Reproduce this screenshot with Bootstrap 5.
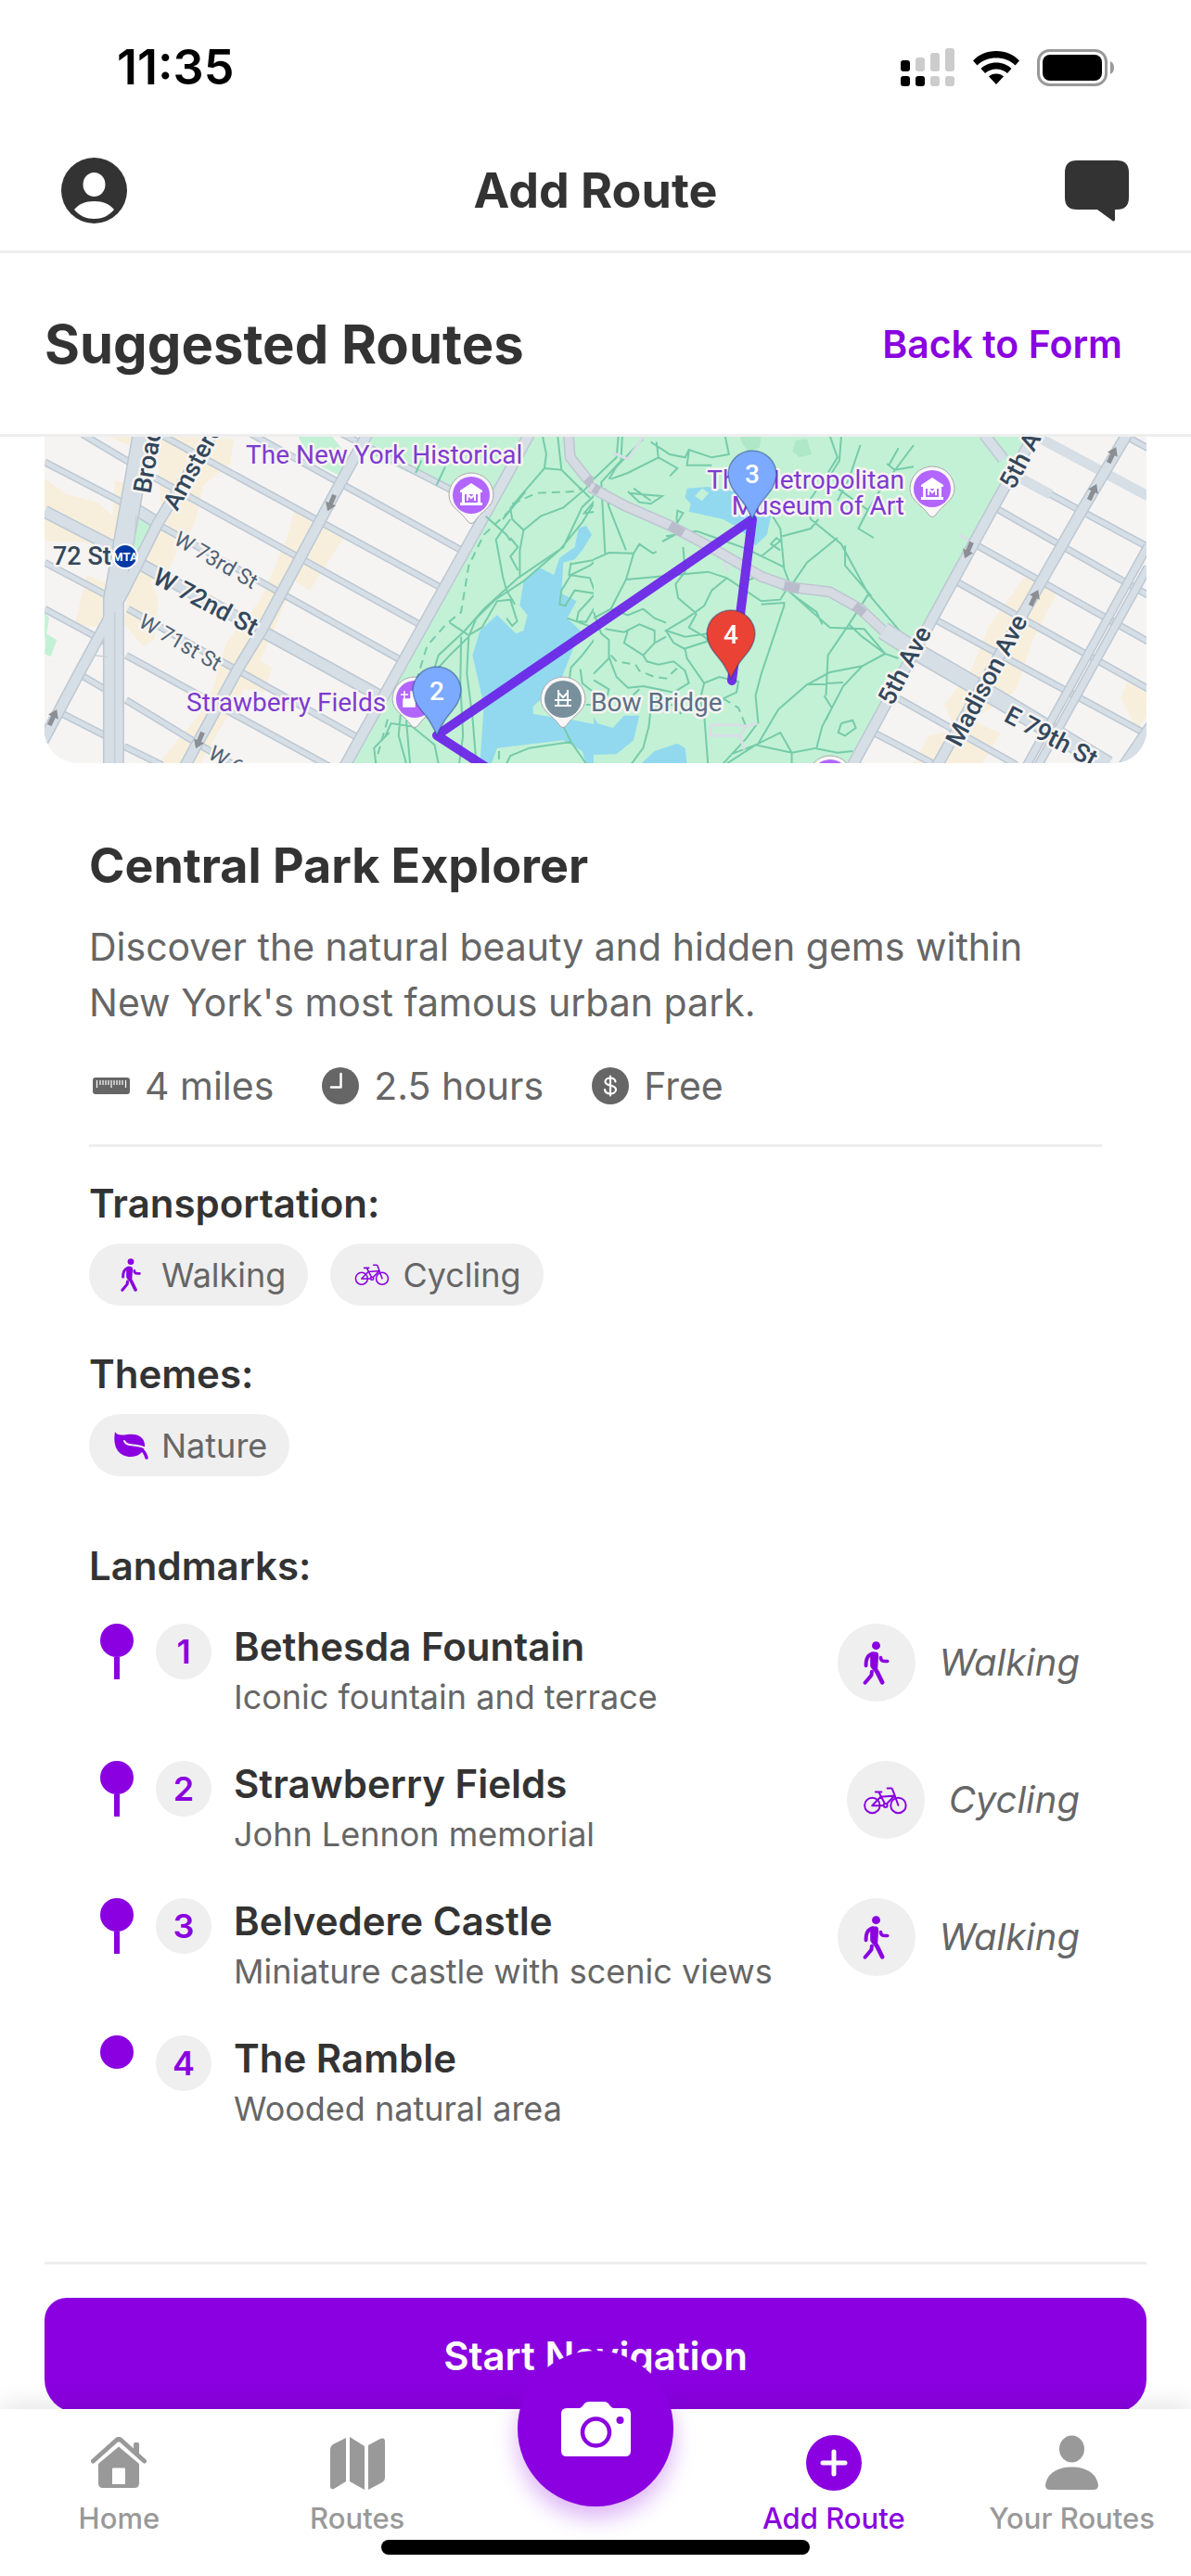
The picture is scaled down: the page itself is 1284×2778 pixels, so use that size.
<!DOCTYPE html>
<html lang="en">
<head>
<meta charset="utf-8">
<meta name="viewport" content="width=device-width, initial-scale=1">
<title>Add Route</title>
<link href="https://cdn.jsdelivr.net/npm/bootstrap@5.3.0/dist/css/bootstrap.min.css" rel="stylesheet">
<style>
  :root { --brand: #8a00e0; --ink: #333; --soft: #666; --line: #eee; --chip: #efefef; }
  body { font-family: Inter, "Liberation Sans", sans-serif; color: var(--ink); background: #fff; }
  svg { display: block; flex: none; }
  .statusbar { height: 141px; padding: 4px 82px 0 126px; color: #000; }
  .clock { font-size: 52px; line-height: 60px; font-weight: 600; }
  .status-icons { gap: 18px; }
  .appbar { height: 132px; padding: 0 66px; border-bottom: 3px solid var(--line); }
  .appbar h1 { font-size: 52px; line-height: 66px; font-weight: 700; }
  .subbar { height: 198px; padding: 0 74px 0 48px; border-bottom: 3px solid var(--line); }
  .subbar h2 { font-size: 58px; line-height: 72px; font-weight: 700; }
  .subbar a { font-size: 41px; line-height: 54px; font-weight: 600; color: var(--brand); }
  .feed { min-height: 0; padding: 0 48px; }
  .mapview { height: 352px; border-radius: 0 0 36px 36px; background: #f6f4f2; }
  .mapview text { font-family: Roboto, "Liberation Sans", sans-serif; font-size: 28px; paint-order: stroke; stroke: #f6f4f2; stroke-width: 5px; stroke-linejoin: round; }
  .mapview .minor text { font-size: 23px; }
  .mapview .avenue text { font-size: 27px; }
  .mapview .bare text { stroke: none; }
  .mapview .metro text { font-size: 13px; stroke: none; }
  .thin path { vector-effect: non-scaling-stroke; }
  .route-body { padding: 78px 48px 0; }
  .route-body h3 { font-size: 52px; line-height: 66px; font-weight: 700; margin-bottom: 24px; }
  .t-body { font-size: 41px; line-height: 60px; color: var(--soft); }
  .stats { gap: 48px; margin-top: 30px; padding-bottom: 33px; border-bottom: 3px solid var(--line); }
  .stat { gap: 12px; }
  .t-head { font-size: 42px; line-height: 54px; font-weight: 600; }
  .first-head { margin-top: 34px; }
  .list-head { margin: 70px 0 35px; }
  .chips { gap: 24px; margin: 16px 0 47px; }
  .chip { height: 67px; padding: 0 24px; gap: 12px; background: var(--chip); color: var(--soft); font-size: 36px; border-radius: 34px; }
  .stop { height: 148px; padding-right: 24px; }
  .rail { width: 60px; }
  .dot { width: 36px; height: 36px; background: var(--brand); }
  .stem { width: 6px; height: 24px; background: var(--brand); }
  .num { width: 60px; height: 60px; margin: 0 24px 0 12px; background: var(--chip); color: var(--brand); font-size: 36px; font-weight: 600; }
  .stop-name { font-size: 42px; line-height: 50px; font-weight: 600; }
  .stop-note { font-size: 36px; line-height: 44px; margin-top: 7px; color: var(--soft); }
  .mode { height: 84px; gap: 26px; font-size: 40px; font-style: italic; color: var(--soft); }
  .mode-disc { width: 84px; height: 84px; background: var(--chip); }
  .route-end { margin-top: 96px; padding-top: 36px; border-top: 3px solid var(--line); }
  .btn-start { height: 124px; border: 0; border-radius: 24px 24px 36px 36px; font-size: 42px; font-weight: 600; background: var(--brand); color: #fff; }
  .tabbar { height: 180px; padding-top: 28px; background: #fff; box-shadow: 0 -6px 24px rgba(0,0,0,.1); }
  .tab { gap: 12px; flex: 1 1 0; color: #999; font-size: 31px; line-height: 36px; font-weight: 500; text-decoration: none; white-space: nowrap; }
  .tab.current { color: var(--brand); }
  .tab-icon { height: 60px; }
  .shoot { width: 168px; height: 168px; top: -63px; left: 50%; margin-left: -84px; padding: 0; border: 0; background: var(--brand); box-shadow: 0 12px 24px rgba(138,0,224,.3); }
  .homebar { width: 36%; height: 16px; bottom: 23px; left: 32%; background: #000; }
  .purple { color: var(--brand); }
</style>
<script src="https://cdn.jsdelivr.net/npm/bootstrap@5.3.0/dist/js/bootstrap.bundle.min.js"></script>
</head>
<body class="d-flex flex-column vh-100 overflow-hidden">

<svg width="0" height="0" class="position-absolute" aria-hidden="true">
  <symbol id="walk" viewBox="186 116 142 142">
    <circle cx="257" cy="130" r="13.5" fill="currentColor"/>
    <g fill="none" stroke="currentColor" stroke-linecap="round" stroke-linejoin="round">
      <path d="M246 156C229 162 224 172 224 195" stroke-width="12"/>
      <path d="M272 169L273 175Q276 181 285 181H294" stroke-width="11"/>
      <path d="M243 215L242 226L221 251" stroke-width="12"/>
      <path d="M248 200Q257 209 262 219L277 250" stroke-width="14"/>
    </g>
    <path d="M238 156Q246 149 256 151Q265 152 265 162L262 206L252 210L238 198Z" fill="currentColor"/>
  </symbol>
  <symbol id="bike" viewBox="209 562 143 143">
    <g fill="none" stroke="currentColor" stroke-width="6" stroke-linecap="round" stroke-linejoin="round">
      <circle cx="237.500" cy="650" r="25"/><circle cx="323" cy="650" r="25"/><circle cx="281" cy="650" r="6"/>
      <path d="M237 651L265 622L312 618M248 606H268M259 607L279 645M237 651H274M285 645L310 619M287 594H300Q303 594 304 598L323 650"/>
    </g>
  </symbol>
  <symbol id="poi" viewBox="-26 -26 52 60">
    <path d="M-24 0A24 24 0 1 1 24 0C24 13 10 18 4 28Q0 33-4 28C-10 18-24 13-24 0Z" fill="#f8f6f6" stroke="#a9a9ad" stroke-width="1"/>
    <circle r="20" fill="currentColor"/>
  </symbol>
  <symbol id="museum" viewBox="-14 -14 28 28">
    <path d="M-12-4L0-12L12-4V-2H-12ZM-10-2H-7V9H-10ZM7-2H10V9H7ZM-12 9H12V12H-12ZM-10-4H10V0H-10Z" fill="#fff"/>
    <path d="M-4 7V0L0 4L4 0V7" fill="none" stroke="#fff" stroke-width="2"/>
  </symbol>
  <symbol id="pin" viewBox="-27 -27 54 76">
    <path d="M-26 0A26 26 0 1 1 26 0C25 14 17 20 9 31C4 39 2 43 0 48C-2 43-4 39-9 31C-17 20-25 14-26 0Z" fill="currentColor" stroke="#1d3a78" stroke-opacity=".45" stroke-width="1.500"/>
  </symbol>
  <symbol id="way" viewBox="-8 -10 16 20"><path d="M0-10L6-1H2.500V9H-2.500V-1H-6Z" fill="#8b8f94"/></symbol>
</svg>

<div class="statusbar d-flex align-items-center justify-content-between flex-shrink-0">
  <span class="clock">11:35</span>
  <div class="status-icons d-flex align-items-center">
    <svg width="60" height="42" viewBox="0 0 60 42" aria-label="Signal">
      <g fill="#ccc"><rect x="17" y="10" width="10" height="15" rx="3"/><rect x="33" y="5" width="10" height="20" rx="3"/><rect x="49" y="0" width="10" height="25" rx="3"/><rect x="33" y="30" width="10" height="11" rx="3"/><rect x="49" y="30" width="10" height="11" rx="3"/></g>
      <rect x="1" y="13" width="10" height="12" rx="3"/><rect x="1" y="30" width="10" height="11" rx="3"/><rect x="17" y="30" width="10" height="11" rx="3"/>
    </svg>
    <svg width="52" height="38" viewBox="0 0 52 38" aria-label="Wi-Fi">
      <path d="M26 1C16 1 7 5 1 11.500L5.500 16.500C11 11 18 8.500 26 8.500S41 11 46.500 16.500L51 11.500C45 5 36 1 26 1ZM26 13.500C19.500 13.500 13.500 16 9.500 20L14 25C17.500 22 21.500 20.500 26 20.500S34.500 22 38 25L42.500 20C38.500 16 32.500 13.500 26 13.500ZM26 25.500C22.500 25.500 20 26.500 18 28.500L26 37L34 28.500C32 26.500 29.500 25.500 26 25.500Z"/>
    </svg>
    <svg width="84" height="40" viewBox="0 0 84 40" aria-label="Battery">
      <rect x="1.500" y="1.500" width="73" height="37" rx="12" fill="none" stroke="#999" stroke-width="3"/>
      <rect x="6" y="6" width="64" height="28" rx="8"/><path d="M79 13Q83 15 83 20T79 27Z" fill="#999"/>
    </svg>
  </div>
</div>

<header class="appbar d-flex align-items-center justify-content-between flex-shrink-0">
  <svg width="71" height="71" viewBox="0 0 71 71" aria-label="Profile">
    <circle cx="35.500" cy="35.500" r="35.500" fill="#333"/>
    <ellipse cx="35.500" cy="29" rx="12" ry="13" fill="#fff"/>
    <path d="M14 56C19 50 26 47 35.500 47S52 50 57 56C51 63 44 66 35.500 66S20 63 14 56Z" fill="#fff"/>
  </svg>
  <h1 class="m-0">Add Route</h1>
  <svg width="71" height="68" viewBox="0 0 71 68" aria-label="Messages">
    <path d="M14 1H57Q70 1 70 14V41Q70 54 57 54H55V65Q54 68 51 65L36 54H14Q1 54 1 41V14Q1 1 14 1Z" fill="#333"/>
  </svg>
</header>

<div class="subbar d-flex align-items-center justify-content-between flex-shrink-0">
  <h2 class="m-0">Suggested Routes</h2>
  <a href="#form" class="text-decoration-none">Back to Form</a>
</div>

<main class="feed flex-fill overflow-hidden">
  <article>
    <div class="mapview overflow-hidden">
      <svg width="100%" height="352" viewBox="0 0 1188 352" preserveAspectRatio="xMidYMid slice" role="img" aria-label="Route map">
        <rect width="1188" height="352" fill="#f6f4f2"/>
        <!-- west side -->
        <g class="thin" transform="matrix(.40816 0 0 .33333 -8 -11)" fill="none">
          <g fill="#f7efdc">
            <path d="M20 170L80 220L160 245L200 290L205 175L255 190L235 385L195 390L120 375L20 370ZM315 30L520 40L510 120L440 190L415 320L370 400L350 460L300 500L320 560L310 690L280 710L230 640L245 480L280 400L330 300ZM130 480L190 510L170 650L100 640Z"/>
            <path d="M680 270L815 350L720 530L680 500L590 755L620 780L600 860L545 850L430 1090L320 1090L450 900L500 700L590 560L660 360Z"/>
            <path d="M190 33L260 33L240 60Z"/>
          </g>
          <path d="M690 33H780L830 110L800 160L720 110ZM880 33H1300L1200 230L1100 215L860 80ZM250 290L310 320L262 410L240 400ZM20 600L32 620L20 700ZM24 670L52 690L36 745L20 735ZM180 640L184 690L165 685Z" fill="#c3f1d5"/>
          <path d="M1240 160L1300 33H1568V1090H815Z" fill="#c3f1d5"/>
          <path d="M1450 320L1465 350L1440 400L1420 430L1390 440L1385 540L1425 565L1400 620L1435 660L1380 830L1310 905L1310 930L1420 950L1520 975L1545 960L1568 940V1060H1540V1090H1450L1440 1050L1390 1015L1215 1040L1200 1090H1170L1180 900L1150 740L1170 660L1215 610L1265 670L1285 660L1295 610L1275 580L1285 500L1325 455L1365 480L1380 425L1420 390L1430 330Z" fill="#92d9f0"/>
          <g stroke="#bcc8d3" stroke-width="8">
            <path d="M560 20L1120 400M320 22L1065 520M310 165L1010 640M280 290L960 755M240 590L845 1005M235 740L780 1105M235 885L430 1030L520 1095M800 20L1110 215M120 25L250 120M20 115L240 255M20 440L190 550M20 590L185 700M110 800L180 850M60 925L180 1000M230 1035L330 1095M20 1050L60 1095"/>
            <path d="M280 450L925 885M20 275L210 395M250 260L330 320" stroke-width="14"/>
          </g>
          <g stroke="#d6dee6" stroke-width="5">
            <path d="M560 20L1120 400M320 22L1065 520M310 165L1010 640M280 290L960 755M240 590L845 1005M235 740L780 1105M235 885L430 1030L520 1095M800 20L1110 215M120 25L250 120M20 115L240 255M20 440L190 550M20 590L185 700M110 800L180 850M60 925L180 1000M230 1035L330 1095M20 1050L60 1095"/>
            <path d="M280 450L925 885M20 275L210 395M250 260L330 320" stroke-width="11"/>
          </g>
          <g stroke="#bcc8d3" stroke-width="13">
            <path d="M1302 20L1240 160L812 1100M872 25L800 185L590 665L530 785L390 1100M465 20L320 310L230 530L110 800L10 1030"/>
            <path d="M280 20L202 560V1100" stroke-width="23"/>
          </g>
          <g stroke="#d6dee6" stroke-width="10">
            <path d="M1302 20L1240 160L812 1100M872 25L800 185L590 665L530 785L390 1100M465 20L320 310L230 530L110 800L10 1030"/>
            <path d="M280 20L202 560V1100" stroke-width="20"/>
          </g>
          <path d="M262 290L256 380M205 600V1090M150 740L185 745" stroke="#c7d0d9" stroke-width="1.500"/>
          <g stroke="#75cbaa" stroke-width="2">
            <path d="M1335 30L1345 90L1340 135L1280 220L1250 265L1255 300L1285 335L1275 400L1275 490M1375 30L1385 140L1340 135M1385 140L1410 170L1460 230M1250 300L1212 365L1230 485L1240 530L1262 575M1250 360L1270 390L1250 420L1270 465M1285 335L1330 290L1390 262L1450 200L1480 150L1530 60M1568 60L1500 190L1440 260L1390 390L1270 490L1180 590L1130 660L1060 740L1050 780M1480 230L1440 310L1380 400L1285 500L1210 560L1160 620L1140 680L1090 740L1060 780M1500 200L1445 280L1478 275L1482 235L1520 290L1568 320M1498 290V410L1558 408M1090 635L1140 675L1175 650L1215 565L1250 560L1268 630L1255 645L1240 620M1120 680L1118 830L1125 1000L1115 1090M1140 680L1135 800L1150 940L1160 1090M1185 290L1240 350L1250 370M1290 210L1230 300M1055 190L1078 130M1000 150L1015 110"/>
            <path d="M1410 440L1405 480L1460 490L1475 540L1420 530L1395 580L1380 575L1385 530L1410 480L1460 450L1480 430L1410 445M1475 540L1430 600L1425 630L1450 632L1475 580L1530 540L1550 490L1568 520M1490 660L1520 690L1515 740L1490 790L1500 840L1470 900L1450 900M1490 660L1440 740L1410 780L1405 830M1400 620L1480 655L1568 640M1500 650L1540 670M1435 785L1440 830L1470 860L1540 800L1568 820M1390 970L1410 1020L1300 1040L1250 1065L1240 1090M1410 1020L1450 1090M960 930L955 1000L975 1090M975 950L985 1090M920 1000L935 960L990 970L1050 1030L1060 1090M895 1090L890 1040L930 990"/>
            <path d="M1255 250L1320 215L1420 210L1440 200M1250 270L1180 350L1140 450L1120 600L1080 640L1030 710L1000 830M900 1060L930 930M1220 1050V1090M1515 750L1568 770" stroke-dasharray="9 6"/>
          </g>
          <path d="M1403 20L1408 100L1450 165L1500 225L1568 265" stroke="#bfc6d2" stroke-width="12"/>
          <path d="M1403 20L1408 100L1450 165L1500 225L1568 265" stroke="#d5dae3" stroke-width="9"/>
          <path d="M1452 168L1487 212" stroke="#b9bdcb" stroke-width="10"/>
          <path d="M1520 90L1550 105L1568 80" stroke="#d5dae3" stroke-width="3"/>
        </g>
        <!-- park interior and east side -->
        <g class="thin" transform="matrix(.41071 0 0 .33333 592 -11)" fill="none">
          <path d="M0 33H1145L1050 260L890 620L680 1090H0V960L50 975L80 935V900H0Z" fill="#c3f1d5"/>
          <path d="M385 33H440L435 70L405 80L388 50ZM530 45L560 40L572 90L540 100L522 80Z" fill="#aee8c6"/>
          <path d="M245 200L300 195L370 210L465 290L455 350L425 385L400 350L370 320L340 300L250 275L255 250L240 230ZM0 940L10 960L50 975L80 935L120 935L105 1015L60 1060L0 1062ZM125 1090L160 1050L220 1025L240 1040L245 1090Z" fill="#92d9f0"/>
          <path d="M285 200L302 215L285 240L265 225Z" fill="#c3f1d5"/>
          <path d="M1130 485L1215 540L1150 700L1110 850L1060 900L990 950L1068 992L1020 1090H840L880 1000L950 980L920 900L990 790L1040 640L1100 540ZM1400 825L1451 860V940L1425 980L1385 880Z" fill="#f7efdc"/>
          <g stroke="#75cbaa" stroke-width="2">
            <path d="M65 30L60 100L0 170M75 30L72 110L20 180L30 410M130 40L60 130L40 170M165 50L170 100L90 150L45 170M345 30L355 90L310 100L250 75L240 100L200 90L150 50M250 80L245 125L310 125M170 100L220 135L200 160M90 210L120 245L150 250L180 225L130 220L95 215M105 200L150 240M30 200L40 260L85 400M215 320L235 280L220 272L218 295L222 345L180 372M190 355L270 338L400 395L500 455M235 390L240 470L215 510L222 555L270 605M0 430L40 408L105 410L85 495L45 590L0 620M105 410L120 380L155 410L165 405M85 495L170 485L300 470L350 490L440 565L490 560L515 510L500 460L490 330L460 270L430 210M350 490L310 530L290 580L245 620L190 660L240 680L300 670M500 530L440 480L400 500M440 575L500 570L500 580L440 800L425 870L432 960M620 30L640 100L600 180L560 250L570 300L650 380L720 540L830 700M650 30L645 110L625 150L640 200L720 270L695 330L735 360M720 270L755 200L840 60M700 60L670 170L640 240M770 120L790 140L840 130M775 125L800 70M495 355L570 330L590 300M640 360L560 440L510 530L620 650L710 655L765 735L800 750M720 545L670 640L615 740L610 870M660 385V450L730 550M670 640L705 680L765 735L705 775L655 840L600 970L585 1040L520 1055L425 1030L350 1090M520 1055L490 990L425 1030L360 1060M520 1055V1090M560 835L620 795L705 775M560 835L485 915L430 1030M560 835L655 828M605 870L625 910L610 950M585 1042L640 1055L680 1050M650 960L680 950L688 975L660 1000L642 990L650 960M290 930L300 1090M340 1090L400 1010L430 960M440 420L490 370L480 360L465 380L490 400M510 530L540 560L585 600L600 640"/>
            <path d="M0 600L20 670L40 690L40 750L0 800M30 655L80 665L120 640L160 660L160 700L130 740L80 700L90 660M40 745L60 810L90 845L130 840L170 850L210 860L250 830L240 790L210 760L170 770L140 760L130 740M190 660L210 700L240 720L245 750L290 830L280 880L290 940M235 720L310 690M290 830L330 810L380 825L375 860L340 880M160 700L190 680M0 820L40 850L30 900L60 920L120 850M150 910L145 970L130 1040L100 1090M180 850L150 910L210 900L230 930M270 605L250 650L290 680L310 700M45 590L90 610L130 590L160 620L190 635"/>
            <path d="M45 740L60 760L110 770L120 790L160 810L190 815L230 770M340 880L380 910L400 970" stroke-dasharray="9 6"/>
          </g>
          <path d="M308 965H380L400 970L430 960M308 965L305 1000H385L395 1045M400 970L385 1000M340 440L355 468M130 33L90 105L50 85M960 350L1000 380" stroke="#d9dde6" stroke-width="3"/>
          <path d="M-10 195L80 255L200 320L300 385L440 485L520 520L620 535L700 590L760 660L850 730" stroke="#bfc6d2" stroke-width="12"/>
          <path d="M-10 195L80 255L200 320L300 385L440 485L520 520L620 535L700 590L760 660L850 730" stroke="#d5dae3" stroke-width="9"/>
          <path d="M200 320L235 345M500 515L540 525M685 580L710 605M0 198L14 208" stroke="#b9bdcb" stroke-width="10"/>
          <path d="M1110 160L1455 390M1050 260L1455 545M1000 380L1455 695M950 500L1455 848M890 620L1440 988M800 880L1110 1095M735 990L890 1090M1395 30L1455 70" stroke="#bcc8d3" stroke-width="8"/>
          <path d="M1110 160L1455 390M1050 260L1455 545M1000 380L1455 695M950 500L1455 848M890 620L1440 988M800 880L1110 1095M735 990L890 1090M1395 30L1455 70" stroke="#d6dee6" stroke-width="5"/>
          <path d="M1160 30L1455 225M1110 160L1200 220" stroke="#d6dee6" stroke-width="11"/>
          <path d="M760 660L850 730L1060 880L1350 1095" stroke="#bcc8d3" stroke-width="20"/>
          <path d="M760 660L850 730L1060 880L1350 1095" stroke="#d6dee6" stroke-width="17"/>
          <g stroke="#bcc8d3" stroke-width="13">
            <path d="M1155 30L1050 260L890 620L680 1095M1400 25L1280 275L1120 620L900 1100M1025 25L1075 105M1465 965L1390 1100"/>
            <path d="M1455 385L1135 1100M1455 455L1165 1100" stroke-width="10"/>
          </g>
          <g stroke="#d6dee6" stroke-width="10">
            <path d="M1155 30L1050 260L890 620L680 1095M1400 25L1280 275L1120 620L900 1100M1025 25L1075 105M1465 965L1390 1100"/>
            <path d="M1455 385L1135 1100M1455 455L1165 1100" stroke-width="7"/>
          </g>
        </g>
        <!-- one-way arrows -->
        <use href="#way" x="-8" y="-10" width="16" height="20" transform="translate(309 71) rotate(203)"/>
        <use href="#way" x="-8" y="-10" width="16" height="20" transform="translate(167 327) rotate(203)"/>
        <use href="#way" x="-8" y="-10" width="16" height="20" transform="translate(9 303) rotate(25)"/>
        <use href="#way" x="-8" y="-10" width="16" height="20" transform="translate(1151 20) rotate(25)"/>
        <use href="#way" x="-8" y="-10" width="16" height="20" transform="translate(1130 60) rotate(25)"/>
        <use href="#way" x="-8" y="-10" width="16" height="20" transform="translate(1067 174) rotate(25)"/>
        <use href="#way" x="-8" y="-10" width="16" height="20" transform="translate(996 122) rotate(203)"/>
        <!-- street names -->
        <g class="avenue" fill="#33475b" font-weight="500">
          <text transform="translate(114 62) rotate(-80)">Broadway</text>
          <text transform="translate(143 81) rotate(-61)">Amsterdam Ave</text>
          <text transform="translate(115 157) rotate(28)">W 72nd St</text>
          <text transform="translate(1045 58) rotate(-62)">5th Ave</text>
          <text transform="translate(914 291) rotate(-62)">5th Ave</text>
          <text transform="translate(987 336) rotate(-62)">Madison Ave</text>
          <text transform="translate(1033 306) rotate(28)">E 79th St</text>
          <text x="9" y="138">72 St</text>
        </g>
        <g class="minor" fill="#4d6073">
          <text transform="translate(138 115) rotate(30)">W 73rd St</text>
          <text transform="translate(100 204) rotate(30)">W 71st St</text>
          <text transform="translate(175 346) rotate(30)">W 69th St</text>
        </g>
        <g class="metro">
          <circle cx="87" cy="129" r="13" fill="#0039a6" stroke="#fff" stroke-width="2"/>
          <text x="87" y="134" text-anchor="middle" fill="#fff" font-weight="700">MTA</text>
        </g>
        <!-- places -->
        <g fill="#7e3bd0">
          <text x="217" y="29">The New York Historical</text>
          <text x="153" y="296">Strawberry Fields</text>
          <text x="927" y="56" text-anchor="end">The Metropolitan</text>
          <text x="927" y="84" text-anchor="end">Museum of Art</text>
        </g>
        <text x="589" y="296" fill="#5b7083">Bow Bridge</text>
        <g color="#b266ff">
          <use href="#poi" x="434" y="37" width="52" height="60"/>
          <use href="#poi" x="931" y="30" width="52" height="60"/>
          <use href="#poi" x="373" y="257" width="52" height="60"/>
          <use href="#poi" x="821" y="342" width="52" height="60"/>
        </g>
        <g color="#78909c"><use href="#poi" x="533" y="257" width="52" height="60"/></g>
        <use href="#museum" x="446" y="48" width="28" height="28"/>
        <use href="#museum" x="943" y="42" width="28" height="28"/>
        <path d="M388 274V282M384 278H392M387 283H395V291H387ZM395 275H399V291H395Z" fill="#fff" stroke="#fff" stroke-width="1.500"/>
        <path d="M554 273V291M564 273V291M550 284H568M550 290H568M554 276L559 281L564 276" fill="none" stroke="#fff" stroke-width="2"/>
        <!-- route and numbered pins -->
        <path d="M741 263L763 89L423 322L483 361" fill="none" stroke="#6a22e8" stroke-opacity=".93" stroke-width="10" stroke-linecap="round" stroke-linejoin="round"/>
        <g color="#7baaff">
          <use href="#pin" x="396" y="247" width="54" height="76"/>
          <use href="#pin" x="736" y="14" width="54" height="76"/>
        </g>
        <g color="#ea4335"><use href="#pin" x="713" y="186" width="54" height="76"/></g>
        <g class="bare" fill="#fff" text-anchor="middle" font-weight="500">
          <text x="423" y="284">2</text>
          <text x="763" y="50">3</text>
          <text x="740" y="223">4</text>
        </g>
      </svg>
    </div>

    <div class="route-body">
      <h3>Central Park Explorer</h3>
      <p class="t-body m-0">Discover the natural beauty and hidden gems within New York's most famous urban park.</p>

      <div class="stats t-body d-flex">
        <div class="stat d-flex align-items-center">
          <svg width="48" height="48" viewBox="0 0 48 48"><rect x="4" y="15" width="40" height="18" rx="3" fill="#666"/><path d="M8.500 18V26M24 18V26M12 18V23M15 18V23M18 18V23M21 18V23M27 18V23M30 18V23M33 18V23M36 18V23M39.500 18V26" stroke="#fff" stroke-width="1.200"/></svg>
          <span>4 miles</span>
        </div>
        <div class="stat d-flex align-items-center">
          <svg width="48" height="48" viewBox="0 0 48 48"><circle cx="24" cy="24" r="20" fill="#666"/><path d="M24.500 11V25.500H14" fill="none" stroke="#fff" stroke-width="2.500" stroke-linecap="round" stroke-linejoin="round"/></svg>
          <span>2.5 hours</span>
        </div>
        <div class="stat d-flex align-items-center">
          <svg width="48" height="48" viewBox="0 0 48 48"><circle cx="24" cy="24" r="20" fill="#666"/><path d="M24 13.500V34.500M29.500 19.500C29 16.500 27 15.500 24 15.500C21 15.500 18.500 17 18.500 19.500C18.500 25 30 22 30 28C30 31 27 32.500 24 32.500C21 32.500 18.500 31.500 18 28" fill="none" stroke="#fff" stroke-width="2.200" stroke-linecap="round"/></svg>
          <span>Free</span>
        </div>
      </div>

      <div class="t-head first-head">Transportation:</div>
      <div class="chips d-flex">
        <span class="chip d-flex align-items-center"><svg class="purple" width="42" height="36"><use href="#walk"/></svg>Walking</span>
        <span class="chip d-flex align-items-center"><svg class="purple" width="42" height="37"><use href="#bike"/></svg>Cycling</span>
      </div>

      <div class="t-head">Themes:</div>
      <div class="chips d-flex">
        <span class="chip d-flex align-items-center"><svg class="purple" width="42" height="32" viewBox="-3 -1 42 32"><path d="M1 0C3 4 8 4 14 3C28 1 34 8 33 17C31 23 25 27 18 27C6 27-2 18 1 0Z" fill="currentColor"/><path d="M11 10C14 17 24 12 34 18" fill="none" stroke="#efefef" stroke-width="2" stroke-linecap="round"/><path d="M29 19C33 21 34 25 35 28" fill="none" stroke="currentColor" stroke-width="3.500" stroke-linecap="round"/></svg>Nature</span>
      </div>

      <div class="t-head list-head">Landmarks:</div>
      <ol class="list-unstyled m-0">
        <li class="stop d-flex align-items-start">
          <div class="rail d-flex flex-column align-items-center"><span class="dot rounded-circle"></span><span class="stem"></span></div>
          <div class="num rounded-circle d-flex align-items-center justify-content-center">1</div>
          <div class="flex-fill"><div class="stop-name">Bethesda Fountain</div><div class="stop-note">Iconic fountain and terrace</div></div>
          <div class="mode d-flex align-items-center"><span class="mode-disc rounded-circle d-flex align-items-center justify-content-center"><svg class="purple" width="47" height="47"><use href="#walk"/></svg></span>Walking</div>
        </li>
        <li class="stop d-flex align-items-start">
          <div class="rail d-flex flex-column align-items-center"><span class="dot rounded-circle"></span><span class="stem"></span></div>
          <div class="num rounded-circle d-flex align-items-center justify-content-center">2</div>
          <div class="flex-fill"><div class="stop-name">Strawberry Fields</div><div class="stop-note">John Lennon memorial</div></div>
          <div class="mode d-flex align-items-center"><span class="mode-disc rounded-circle d-flex align-items-center justify-content-center"><svg class="purple" width="47" height="47"><use href="#bike"/></svg></span>Cycling</div>
        </li>
        <li class="stop d-flex align-items-start">
          <div class="rail d-flex flex-column align-items-center"><span class="dot rounded-circle"></span><span class="stem"></span></div>
          <div class="num rounded-circle d-flex align-items-center justify-content-center">3</div>
          <div class="flex-fill"><div class="stop-name">Belvedere Castle</div><div class="stop-note">Miniature castle with scenic views</div></div>
          <div class="mode d-flex align-items-center"><span class="mode-disc rounded-circle d-flex align-items-center justify-content-center"><svg class="purple" width="47" height="47"><use href="#walk"/></svg></span>Walking</div>
        </li>
        <li class="stop d-flex align-items-start">
          <div class="rail d-flex flex-column align-items-center"><span class="dot rounded-circle"></span></div>
          <div class="num rounded-circle d-flex align-items-center justify-content-center">4</div>
          <div class="flex-fill"><div class="stop-name">The Ramble</div><div class="stop-note">Wooded natural area</div></div>
        </li>
      </ol>
    </div>

    <div class="route-end">
      <button type="button" class="btn btn-start w-100">Start Navigation</button>
    </div>
  </article>
</main>

<nav class="tabbar position-relative d-flex flex-shrink-0" aria-label="Main">
  <a href="#home" class="tab d-flex flex-column align-items-center">
    <span class="tab-icon d-flex align-items-center"><svg width="60" height="56" viewBox="0 0 60 56"><path d="M2.500 26L27 4Q30 1 33 4L57.500 26" fill="none" stroke="currentColor" stroke-width="5" stroke-linecap="round"/><path d="M46 17V7.500Q46 6 47.500 6H50.500Q52 6 52 7.500V21Z" fill="currentColor"/><path fill-rule="evenodd" d="M8 29L30 10.500L52 29V50Q52 55 47 55H13Q8 55 8 50ZM24 33.500Q23 33.500 23 34.500V51H37V34.500Q37 33.500 36 33.500Z" fill="currentColor"/></svg></span>
    Home
  </a>
  <a href="#routes" class="tab d-flex flex-column align-items-center">
    <span class="tab-icon d-flex align-items-center"><svg width="59" height="57" viewBox="0 0 59 57"><path d="M0 13Q0 10 3 8L17 1V48L4 56Q0 57 0 53ZM21 0L37 10V57L21 48ZM41 9L54 2Q59 0 59 5V44Q59 47 56 49L41 57Z" fill="currentColor"/></svg></span>
    Routes
  </a>
  <div class="tab"></div>
  <a href="#add" class="tab current d-flex flex-column align-items-center" aria-current="page">
    <span class="tab-icon d-flex align-items-center"><svg width="60" height="60" viewBox="0 0 60 60"><circle cx="30" cy="30" r="30" fill="currentColor"/><path d="M30 18V42M18 30H42" stroke="#fff" stroke-width="5" stroke-linecap="round"/></svg></span>
    Add Route
  </a>
  <a href="#mine" class="tab d-flex flex-column align-items-center">
    <span class="tab-icon d-flex align-items-center"><svg width="57" height="60" viewBox="0 0 57 60"><ellipse cx="28.500" cy="15" rx="13.500" ry="14.500" fill="currentColor"/><path d="M0 54C2 40 15 34.500 28.500 34.500S55 40 57 54Q57 59 52 59H5Q0 59 0 54Z" fill="currentColor"/></svg></span>
    Your Routes
  </a>
  <button type="button" class="shoot position-absolute rounded-circle d-flex align-items-center justify-content-center" aria-label="Take photo">
    <svg width="75" height="59" viewBox="0 0 75 59"><path d="M6 7H19Q22 7 25 2Q27 0 30 0H46Q49 0 51 2Q54 7 57 7H69Q75 7 75 13V53Q75 59 69 59H6Q0 59 0 53V13Q0 7 6 7Z" fill="#fff"/><circle cx="37.500" cy="33" r="14.500" fill="none" stroke="#8a00e0" stroke-width="4.500"/><circle cx="63.500" cy="20" r="4" fill="#8a00e0"/></svg>
  </button>
  <span class="homebar position-absolute rounded-pill"></span>
</nav>
</body>
</html>
